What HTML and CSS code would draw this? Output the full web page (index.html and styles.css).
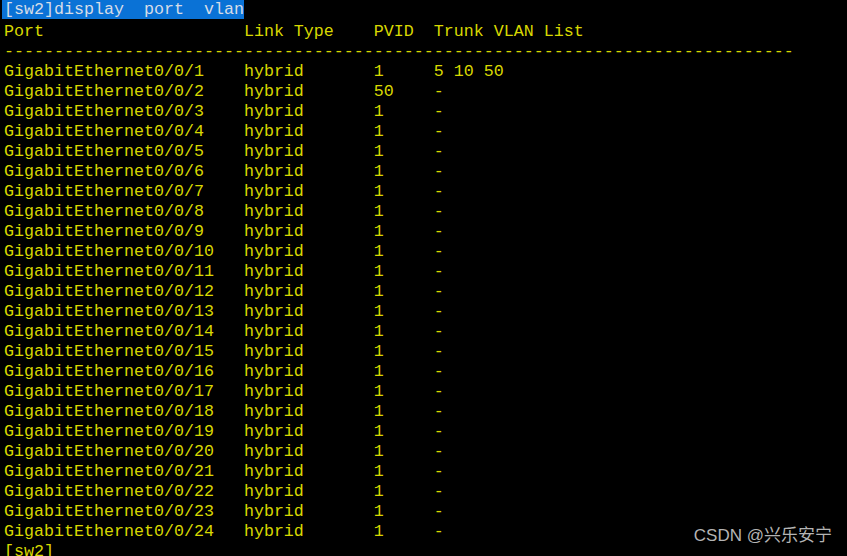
FILE: index.html
```html
<!DOCTYPE html>
<html lang="en">
<head>
  <meta charset="UTF-8">
  <title>display port vlan</title>
  <link rel="stylesheet" href="styles.css">
</head>
<body>

<!-- Command line (selected) -->
<div class="prompt"><span class="selected">[sw2]display  port  vlan</span></div>

<!-- Terminal output -->
<pre class="terminal" id="terminal">Port                    Link Type    PVID  Trunk VLAN List
-------------------------------------------------------------------------------
GigabitEthernet0/0/1    hybrid       1     5 10 50
GigabitEthernet0/0/2    hybrid       50    -
</pre>

<div class="watermark">CSDN @兴乐安宁</div>

<script>
  // fill in ports 3..24, all on the default vlan
  const term = document.getElementById('terminal');
  let rows = '';
  for (let i = 3; i <= 24; i++) {
    rows += ('GigabitEthernet0/0/' + i).padEnd(24) + 'hybrid       1     -\n';
  }
  term.insertAdjacentText('beforeend', rows + '[sw2]');
</script>

</body>
</html>
```
FILE: styles.css
```css
body {
  margin: 0;
  padding: 0;
  background-color: #000;
  overflow: hidden;
  font-family: "Liberation Mono", "Courier New", monospace;
  font-size: 16.67px;
}
.prompt {
  height: 22px;
  padding-left: 2px;
}
.selected {
  display: inline-block;
  background-color: #0a72d6;
  color: #d6dde8;
  padding-left: 2px;
  height: 19px;
  line-height: 19px;
  white-space: pre;
}
.terminal {
  margin: 0;
  padding: 0 0 0 4px;
  font-family: inherit;
  font-size: inherit;
  line-height: 20px;
  color: #d8d800;
  white-space: pre;
}
.watermark {
  position: absolute;
  right: 15px;
  bottom: 10px;
  font-family: "Liberation Sans", "Noto Sans CJK SC", sans-serif;
  font-size: 17px;
  color: #b4b4b4;
}
```
